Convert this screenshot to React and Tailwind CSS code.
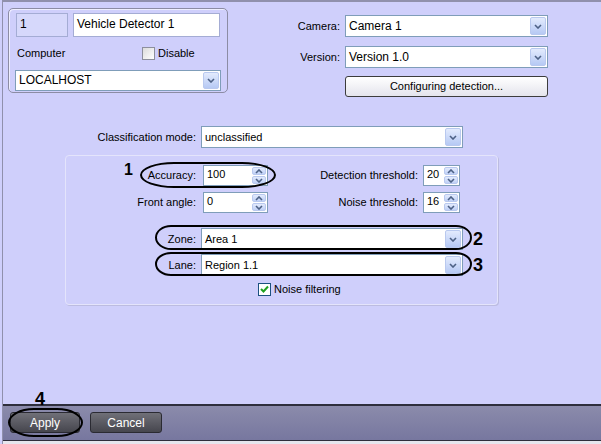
import React from "react";

function Chevron({ up = false }) {
  return (
    <svg width="8" height="5" viewBox="0 0 8 5">
      <path
        d={up ? "M1 4 L4 1 L7 4" : "M1 1 L4 4 L7 1"}
        fill="none"
        stroke="#4d6185"
        strokeWidth="1.6"
      />
    </svg>
  );
}

function DropBtn() {
  return (
    <div className="m-[1px] flex w-[16px] items-center justify-center self-stretch rounded-[2px] border border-[#b9c9ef] bg-linear-to-b from-[#e3ebfd] to-[#b6c9f4]">
      <Chevron />
    </div>
  );
}

function Combo({ value, className }) {
  return (
    <div className={"flex items-center border border-[#7f9db9] bg-white " + className}>
      <span className="flex-1 pl-[3px] leading-none">{value}</span>
      <DropBtn />
    </div>
  );
}

function Spin({ value, className }) {
  return (
    <div className={"flex border border-[#7f9db9] bg-white " + className}>
      <span className="flex-1 pl-[3px] pt-[3px] leading-none">{value}</span>
      <div className="m-[1px] flex w-[14px] flex-col gap-[1px]">
        <div className="flex flex-1 items-center justify-center rounded-[2px] border border-[#b9c9ef] bg-linear-to-b from-[#e3ebfd] to-[#bfd0f6]">
          <Chevron up />
        </div>
        <div className="flex flex-1 items-center justify-center rounded-[2px] border border-[#b9c9ef] bg-linear-to-b from-[#e3ebfd] to-[#bfd0f6]">
          <Chevron />
        </div>
      </div>
    </div>
  );
}

function Ring({ className }) {
  return <div className={"pointer-events-none absolute border-[2.5px] border-black " + className} />;
}

export default function App() {
  return (
    <div className="relative h-[444px] w-[601px] overflow-hidden bg-[#cfcffb] font-['Liberation_Sans',Arial,sans-serif] text-[11px] text-black">
      <div className="ml-[2px] flex h-full flex-col border-l border-t-2 border-[#9090ac]">
        {/* top section */}
        <div className="flex items-start">
          <div className="ml-[5px] mt-[6px] h-[85px] w-[220px] rounded-[5px] border border-[#8c8ca4] px-[6px] pt-[4px] shadow-[inset_1px_1px_0_#eeeeff]">
            <div className="flex gap-[5px]">
              <div className="ml-[1px] h-[24px] w-[52px] border border-[#a4acd4] bg-[#d6d8fb] pl-[3px] pt-[4px] text-[12px] leading-none">1</div>
              <div className="h-[24px] w-[147px] border border-[#a4acd4] bg-white pl-[3px] pt-[4px] text-[12px] leading-none">Vehicle Detector 1</div>
            </div>
            <div className="mt-[8px] flex items-center">
              <span className="ml-[2px] w-[125px]">Computer</span>
              <div className="h-[13px] w-[13px] border border-[#8d8f9c] bg-linear-to-br from-[#dcdcdc] to-white" />
              <span className="ml-[3px]">Disable</span>
            </div>
            <Combo value="LOCALHOST" className="mt-[8px] h-[21px] w-[206px] text-[12px]" />
          </div>

          <div className="ml-auto mr-[53px] mt-[13px] grid grid-cols-[auto_203px] items-center gap-x-[5px]">
            <span className="text-right">Camera:</span>
            <Combo value="Camera 1" className="h-[22px] text-[12px]" />
            <span className="mt-[9px] text-right">Version:</span>
            <Combo value="Version 1.0" className="mt-[9px] h-[22px] text-[12px]" />
            <span />
            <button className="mt-[8px] h-[21px] rounded-[3px] border border-[#3c3c3c] bg-linear-to-b from-white to-[#e4e4ec] text-[11px]">
              Configuring detection...
            </button>
          </div>
        </div>

        {/* classification */}
        <div className="mt-[29px] flex items-center">
          <span className="w-[193px] text-right">Classification mode:</span>
          <Combo value="unclassified" className="ml-[5px] h-[22px] w-[262px]" />
        </div>

        {/* inner group */}
        <div className="ml-[62px] mt-[7px] h-[150px] w-[433px] rounded-[4px] border border-[#e4e4fb] shadow-[1px_1px_0_#bcbce0]">
          <div className="mt-[9px] flex h-[21px] items-center">
            <span className="w-[130px] text-right">Accuracy:</span>
            <Spin value="100" className="ml-[7px] h-[21px] w-[65px]" />
            <span className="w-[150px] text-right">Detection threshold:</span>
            <Spin value="20" className="ml-[5px] h-[21px] w-[37px]" />
          </div>
          <div className="mt-[6px] flex h-[21px] items-center">
            <span className="w-[130px] text-right">Front angle:</span>
            <Spin value="0" className="ml-[7px] h-[21px] w-[65px]" />
            <span className="w-[150px] text-right">Noise threshold:</span>
            <Spin value="16" className="ml-[5px] h-[21px] w-[37px]" />
          </div>
          <div className="mt-[15px] flex items-center">
            <span className="w-[130px] text-right">Zone:</span>
            <Combo value="Area 1" className="ml-[5px] h-[22px] w-[262px]" />
          </div>
          <div className="mt-[4px] flex items-center">
            <span className="w-[130px] text-right">Lane:</span>
            <Combo value="Region 1.1" className="ml-[5px] h-[22px] w-[262px]" />
          </div>
          <div className="mt-[5px] flex items-center pl-[192px]">
            <div className="flex h-[13px] w-[13px] items-center justify-center border border-[#1c5180] bg-white">
              <svg width="9" height="8" viewBox="0 0 9 8">
                <path d="M1 4 L3.5 6.5 L8 1.5" fill="none" stroke="#21a121" strokeWidth="2" />
              </svg>
            </div>
            <span className="ml-[3px]">Noise filtering</span>
          </div>
        </div>

        <div className="flex-1" />

        {/* bottom bar */}
        <div className="flex h-[37px] items-start gap-[10px] border-b border-t-2 border-[#2e2e3c] bg-linear-to-b from-[#8b8bab] to-[#77779f] pl-[7px] pt-[6px]">
          <button className="h-[21px] w-[70px] rounded-[3px] border border-[#2a2a32] bg-linear-to-b from-[#707078] to-[#46464e] text-[12px] text-white">
            Apply
          </button>
          <button className="h-[21px] w-[72px] rounded-[3px] border border-[#2a2a32] bg-linear-to-b from-[#707078] to-[#46464e] text-[12px] text-white">
            Cancel
          </button>
        </div>
        <div className="h-[3px] bg-[#e6e6ee]" />
      </div>

      {/* annotations */}
      <Ring className="left-[140px] top-[162px] h-[26px] w-[136px] rounded-[34px/50%]" />
      <Ring className="left-[155px] top-[225px] h-[25px] w-[317px] rounded-[16px/50%]" />
      <Ring className="left-[155px] top-[252px] h-[24px] w-[317px] rounded-[16px/50%]" />
      <Ring className="left-[8px] top-[408px] h-[29px] w-[75px] rounded-[26px/50%]" />
      <span className="absolute left-[124px] top-[162px] text-[16px] font-bold leading-none">1</span>
      <span className="absolute left-[473px] top-[230px] text-[18px] font-bold leading-none">2</span>
      <span className="absolute left-[473px] top-[256px] text-[18px] font-bold leading-none">3</span>
      <span className="absolute left-[35px] top-[390px] text-[18px] font-bold leading-none">4</span>
    </div>
  );
}
